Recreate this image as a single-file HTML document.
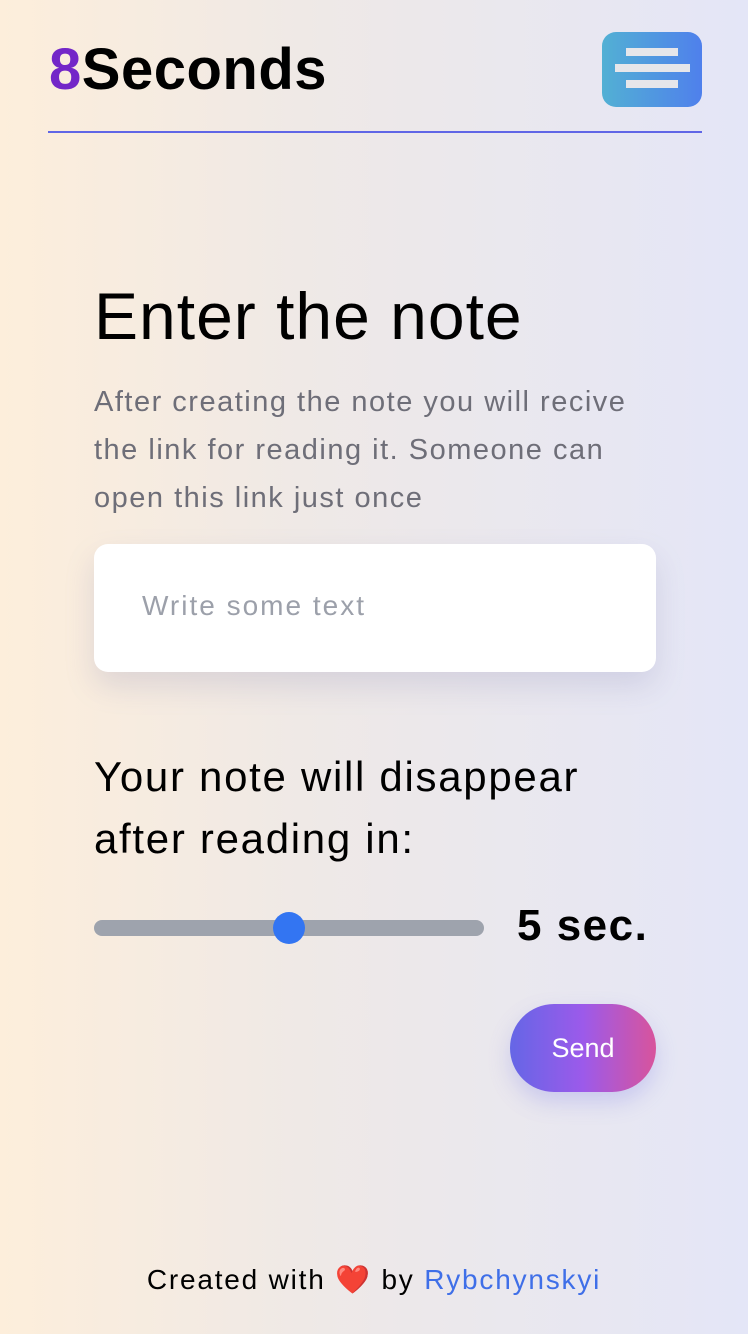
<!DOCTYPE html>
<html><head><meta charset="utf-8"><style>
*{margin:0;padding:0;box-sizing:border-box}
html,body{width:748px;height:1334px;overflow:hidden}
body{background:linear-gradient(90deg,#fdeedb 0%,#efe9e6 40%,#e4e6f7 100%);font-family:"Liberation Sans",sans-serif;position:relative}
.logo{position:absolute;left:49px;top:36px;font-size:58px;font-weight:700;letter-spacing:0.5px;line-height:68px}
.logo span{color:#7326c8}
.menu{position:absolute;left:602px;top:32px;width:100px;height:75px;border-radius:14px;background:linear-gradient(90deg,#52b0d4,#4f80ec)}
.menu i{position:absolute;height:8px;background:#e6e6ea}
.line{position:absolute;left:48px;top:131px;width:654px;height:2px;background:#6066e6}
h1{position:absolute;left:94px;top:280px;font-size:66px;font-weight:400;line-height:72px;letter-spacing:1px}
.desc{position:absolute;left:94px;top:378px;width:556px;font-size:29px;line-height:48px;color:#6e6e78;letter-spacing:1.5px}
.ta{position:absolute;left:94px;top:544px;width:562px;height:128px;background:#fff;border-radius:14px;box-shadow:0 14px 30px rgba(120,120,170,.2);padding:46px 48px;font-size:28px;color:#9ca0aa;letter-spacing:2px}
h2{position:absolute;left:94px;top:746px;font-size:42px;font-weight:400;line-height:62px;letter-spacing:1.7px}
.track{position:absolute;left:94px;top:920px;width:390px;height:16px;border-radius:8px;background:#9ea3ad}
.thumb{position:absolute;left:273px;top:912px;width:32px;height:32px;border-radius:50%;background:#3375f2}
.sec{position:absolute;left:517px;top:900px;font-size:44px;font-weight:700;line-height:52px;letter-spacing:1.5px}
.send{position:absolute;left:510px;top:1004px;width:146px;height:88px;border-radius:44px;background:linear-gradient(90deg,#6566e6,#9c5aea 50%,#d8549c);color:#fff;font-size:27px;text-align:center;line-height:88px;box-shadow:0 10px 22px rgba(110,110,230,.25)}
.foot{position:absolute;left:0;width:748px;top:1260px;text-align:center;font-size:28px;line-height:40px;letter-spacing:1.8px}
.foot a{color:#3f6fe8;text-decoration:none}
</style></head><body>
<div class="logo"><span>8</span>Seconds</div>
<div class="menu"><i style="left:24px;top:16px;width:52px"></i><i style="left:13px;top:32px;width:75px"></i><i style="left:24px;top:48px;width:52px"></i></div>
<div class="line"></div>
<h1>Enter the note</h1>
<div class="desc">After creating the note you will recive the link for reading it. Someone can open this link just once</div>
<div class="ta">Write some text</div>
<h2>Your note will disappear<br>after reading in:</h2>
<div class="track"></div><div class="thumb"></div>
<div class="sec">5 sec.</div>
<div class="send">Send</div>
<div class="foot">Created with <span style="color:#e0202a">❤️</span> by <a>Rybchynskyi</a></div>
</body></html>
